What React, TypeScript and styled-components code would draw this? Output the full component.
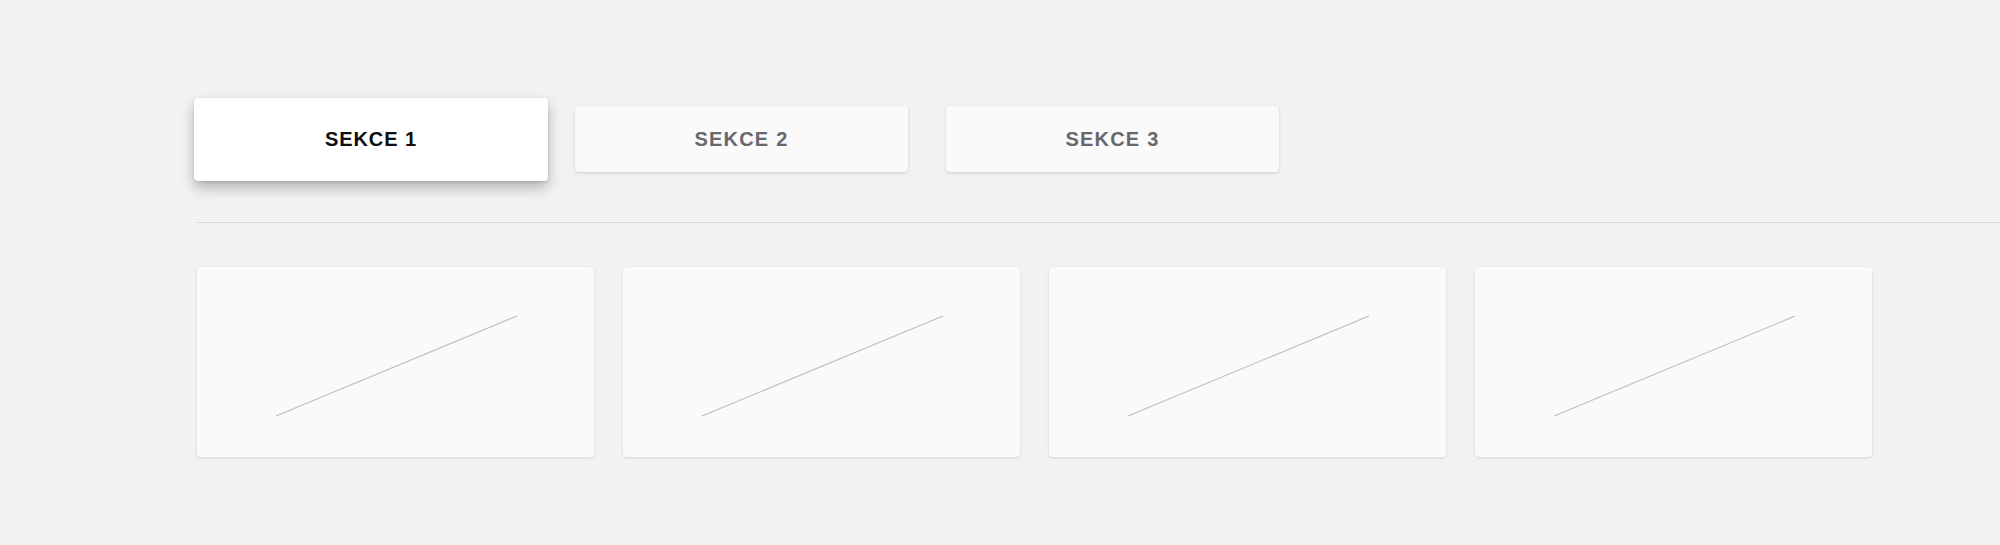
import React, { useState } from "react";
import styled, { createGlobalStyle, css } from "styled-components";

const GlobalStyle = createGlobalStyle`
  html, body {
    margin: 0;
    padding: 0;
    background: #f2f2f2;
  }
  body {
    font-family: "Liberation Sans", Arial, sans-serif;
  }
`;

const Page = styled.div`
  min-height: 545px;
  padding: 106px 0 0 197px;
  box-sizing: border-box;
  background: #f2f2f2;
`;

const TabRow = styled.div`
  display: flex;
  align-items: center;
  gap: 38px;
  padding-left: 6px;
  height: 66px;
`;

const Tab = styled.button<{ $active?: boolean }>`
  flex: none;
  display: flex;
  align-items: center;
  justify-content: center;
  width: 333px;
  height: 66px;
  border: none;
  border-radius: 4px;
  background: #fafafa;
  box-shadow: 0 1px 3px rgba(0, 0, 0, 0.16);
  font-family: "Liberation Sans", Arial, sans-serif;
  font-weight: 700;
  font-size: 20px;
  letter-spacing: 1.2px;
  color: #68686b;
  cursor: pointer;
  padding: 0;

  ${(p) =>
    p.$active &&
    css`
      width: 354px;
      height: 83px;
      margin: -8px -11px -9px -9px;
      background: #ffffff;
      color: #0e0e0e;
      letter-spacing: 0.9px;
      box-shadow: 0 7px 14px rgba(0, 0, 0, 0.26), 0 1px 3px rgba(0, 0, 0, 0.12);
    `}
`;

const Divider = styled.hr`
  margin: 50px 0 0 0;
  border: none;
  height: 1px;
  background: #d5d5d5;
`;

const CardRow = styled.div`
  display: flex;
  gap: 29px;
  margin-top: 44px;
`;

const Card = styled.div`
  flex: none;
  width: 397px;
  height: 190px;
  border-radius: 4px;
  background: #fafafa;
  box-shadow: 0 1px 3px rgba(0, 0, 0, 0.13);
  overflow: hidden;
`;

const Chart = styled.svg`
  display: block;
  width: 397px;
  height: 190px;
`;

const tabs = ["SEKCE 1", "SEKCE 2", "SEKCE 3"];

export default function App() {
  const [active, setActive] = useState(0);
  return (
    <>
      <GlobalStyle />
      <Page>
        <TabRow>
          {tabs.map((t, i) => (
            <Tab key={t} $active={i === active} onClick={() => setActive(i)}>
              {t}
            </Tab>
          ))}
        </TabRow>
        <Divider />
        <CardRow>
          {[0, 1, 2, 3].map((i) => (
            <Card key={i}>
              <Chart viewBox="0 0 397 190">
                <line x1="79" y1="149" x2="320" y2="49" stroke="#bcbcbc" strokeWidth="1.1" />
              </Chart>
            </Card>
          ))}
        </CardRow>
      </Page>
    </>
  );
}
